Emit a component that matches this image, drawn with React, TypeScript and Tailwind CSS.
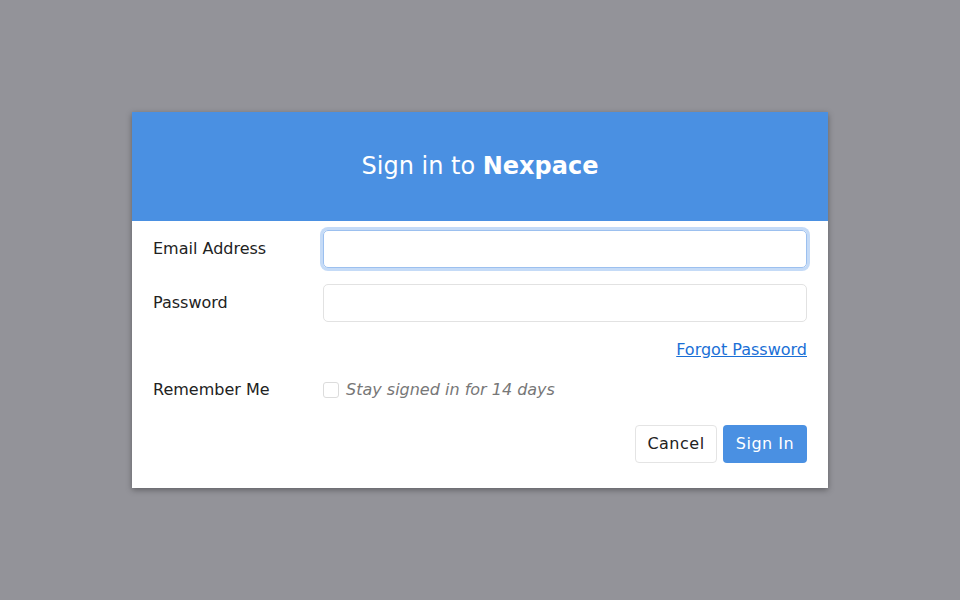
export default function App() {
  return (
    <div
      className="w-[960px] h-[600px] bg-[#939399] flex items-center justify-center"
      style={{ fontFamily: '"DejaVu Sans", sans-serif' }}
    >
      <div className="w-[696px] bg-white shadow-[0_2px_6px_rgba(0,0,0,0.35)]">
        <div className="h-[109px] pb-[2px] bg-[#4a90e2] flex items-center justify-center">
          <h1 className="text-[24px] text-white">
            Sign in to <span className="font-bold">Nexpace</span>
          </h1>
        </div>

        <div className="px-[21px] pt-[9px] pb-[25px]">
          <div className="flex items-center">
            <label className="w-[170px] text-[16px] text-[#222]">Email Address</label>
            <input
              type="email"
              className="flex-1 h-[38px] rounded-[5px] border border-[#9cc0ef] ring-[3px] ring-[#c5dbf7] outline-none px-3"
            />
          </div>
          <div className="flex items-center mt-[16px]">
            <label className="w-[170px] text-[16px] text-[#222]">Password</label>
            <input
              type="password"
              className="flex-1 h-[38px] rounded-[5px] border border-[#e2e2e2] outline-none px-3"
            />
          </div>
          <div className="flex justify-end mt-[18px] leading-[20px]">
            <a href="#" className="text-[16px] text-[#1a6fd6] underline">Forgot Password</a>
          </div>
          <div className="flex items-center mt-[20px] leading-[20px]">
            <label className="w-[170px] text-[16px] text-[#222]">Remember Me</label>
            <div className="flex items-center gap-[7px]">
              <span className="w-4 h-4 rounded-[3px] border border-[#dcdcdc] bg-white" />
              <span className="text-[16px] italic text-[#777]">Stay signed in for 14 days</span>
            </div>
          </div>
          <div className="flex justify-end gap-[6px] mt-[25px]">
            <button className="w-[82px] h-[38px] rounded-[4px] border border-[#e4e4e4] bg-white text-[16px] text-[#222] tracking-[0.5px]">
              Cancel
            </button>
            <button className="w-[84px] h-[38px] rounded-[4px] bg-[#4a90e2] text-[16px] text-white tracking-[0.5px]">
              Sign In
            </button>
          </div>
        </div>
      </div>
    </div>
  )
}
